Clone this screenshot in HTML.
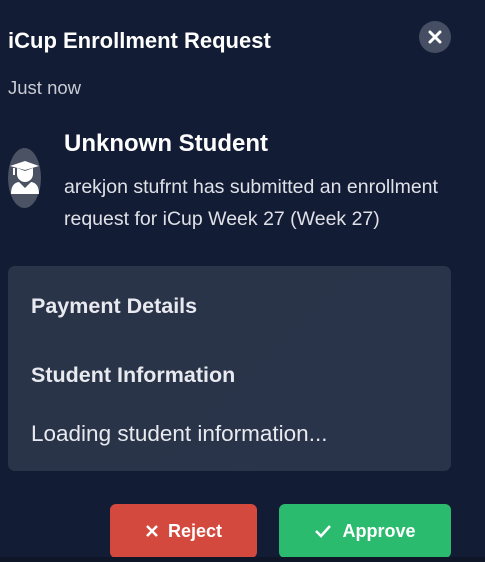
<!DOCTYPE html>
<html><head><meta charset="utf-8"><style>
*{margin:0;padding:0;box-sizing:border-box}
body{width:485px;height:562px;background:#131c35;font-family:"Liberation Sans",sans-serif;position:relative;overflow:hidden;color:#fff}
.a{position:absolute;white-space:nowrap}
</style></head><body>
<div class="a" style="left:8px;top:28px;font-size:22px;font-weight:bold;">iCup Enrollment Request</div>
<div class="a" style="left:419px;top:21px;width:32px;height:32px;border-radius:50%;background:#464e63;">
<svg width="32" height="32" viewBox="0 0 32 32"><path d="M11 11L21 21M21 11L11 21" stroke="#fff" stroke-width="3" stroke-linecap="round"/></svg></div>
<div class="a" style="left:8px;top:77px;font-size:18.5px;color:#c9ccd4;">Just now</div>
<div class="a" style="left:8px;top:148px;width:33px;height:60px;border-radius:50%;background:#4a5264;">
<svg width="33" height="60" viewBox="0 0 33 60"><path d="M2 18L17 13L31 18L17 22Z" fill="#fff"/><path d="M9 20L9 26A8 8 0 0 0 25 26L25 20L17 23Z" fill="#fff"/><rect x="5" y="20" width="2" height="7" fill="#fff"/><path d="M3 46Q3 35 11 34L17 40L23 34Q31 35 31 46Z" fill="#fff"/></svg></div>
<div class="a" style="left:64px;top:130px;font-size:24px;font-weight:bold;">Unknown Student</div>
<div class="a" style="left:64px;top:171px;font-size:19.5px;line-height:32px;color:#dfe1e7;">arekjon stufrnt has submitted an enrollment<br>request for iCup Week 27 (Week 27)</div>
<div class="a" style="left:8px;top:266px;width:443px;height:205px;border-radius:7px;background:linear-gradient(135deg,#2a3448,#29334a);"></div>
<div class="a" style="left:31px;top:294px;font-size:21.5px;font-weight:bold;color:#e8eaef;">Payment Details</div>
<div class="a" style="left:31px;top:363px;font-size:21.5px;font-weight:bold;color:#e8eaef;">Student Information</div>
<div class="a" style="left:31px;top:421px;font-size:22.5px;color:#e8eaef;">Loading student information...</div>
<div class="a" style="left:110px;top:504px;width:147px;height:54px;border-radius:6px;background:#d4493e;display:flex;align-items:center;justify-content:center;font-size:18px;font-weight:bold;">
<svg width="14" height="14" viewBox="0 0 14 14" style="margin-right:9px"><path d="M2 2L12 12M12 2L2 12" stroke="#fff" stroke-width="2.5"/></svg>Reject</div>
<div class="a" style="left:279px;top:504px;width:172px;height:54px;border-radius:6px;background:#2abb6e;display:flex;align-items:center;justify-content:center;font-size:18px;font-weight:bold;">
<svg width="18" height="14" viewBox="0 0 18 14" style="margin-right:10px"><path d="M2 7L7 12L16 2" stroke="#fff" stroke-width="2.5" fill="none"/></svg>Approve</div>
<div class="a" style="left:0;top:557px;width:485px;height:5px;background:#0f1628;"></div>
</body></html>
